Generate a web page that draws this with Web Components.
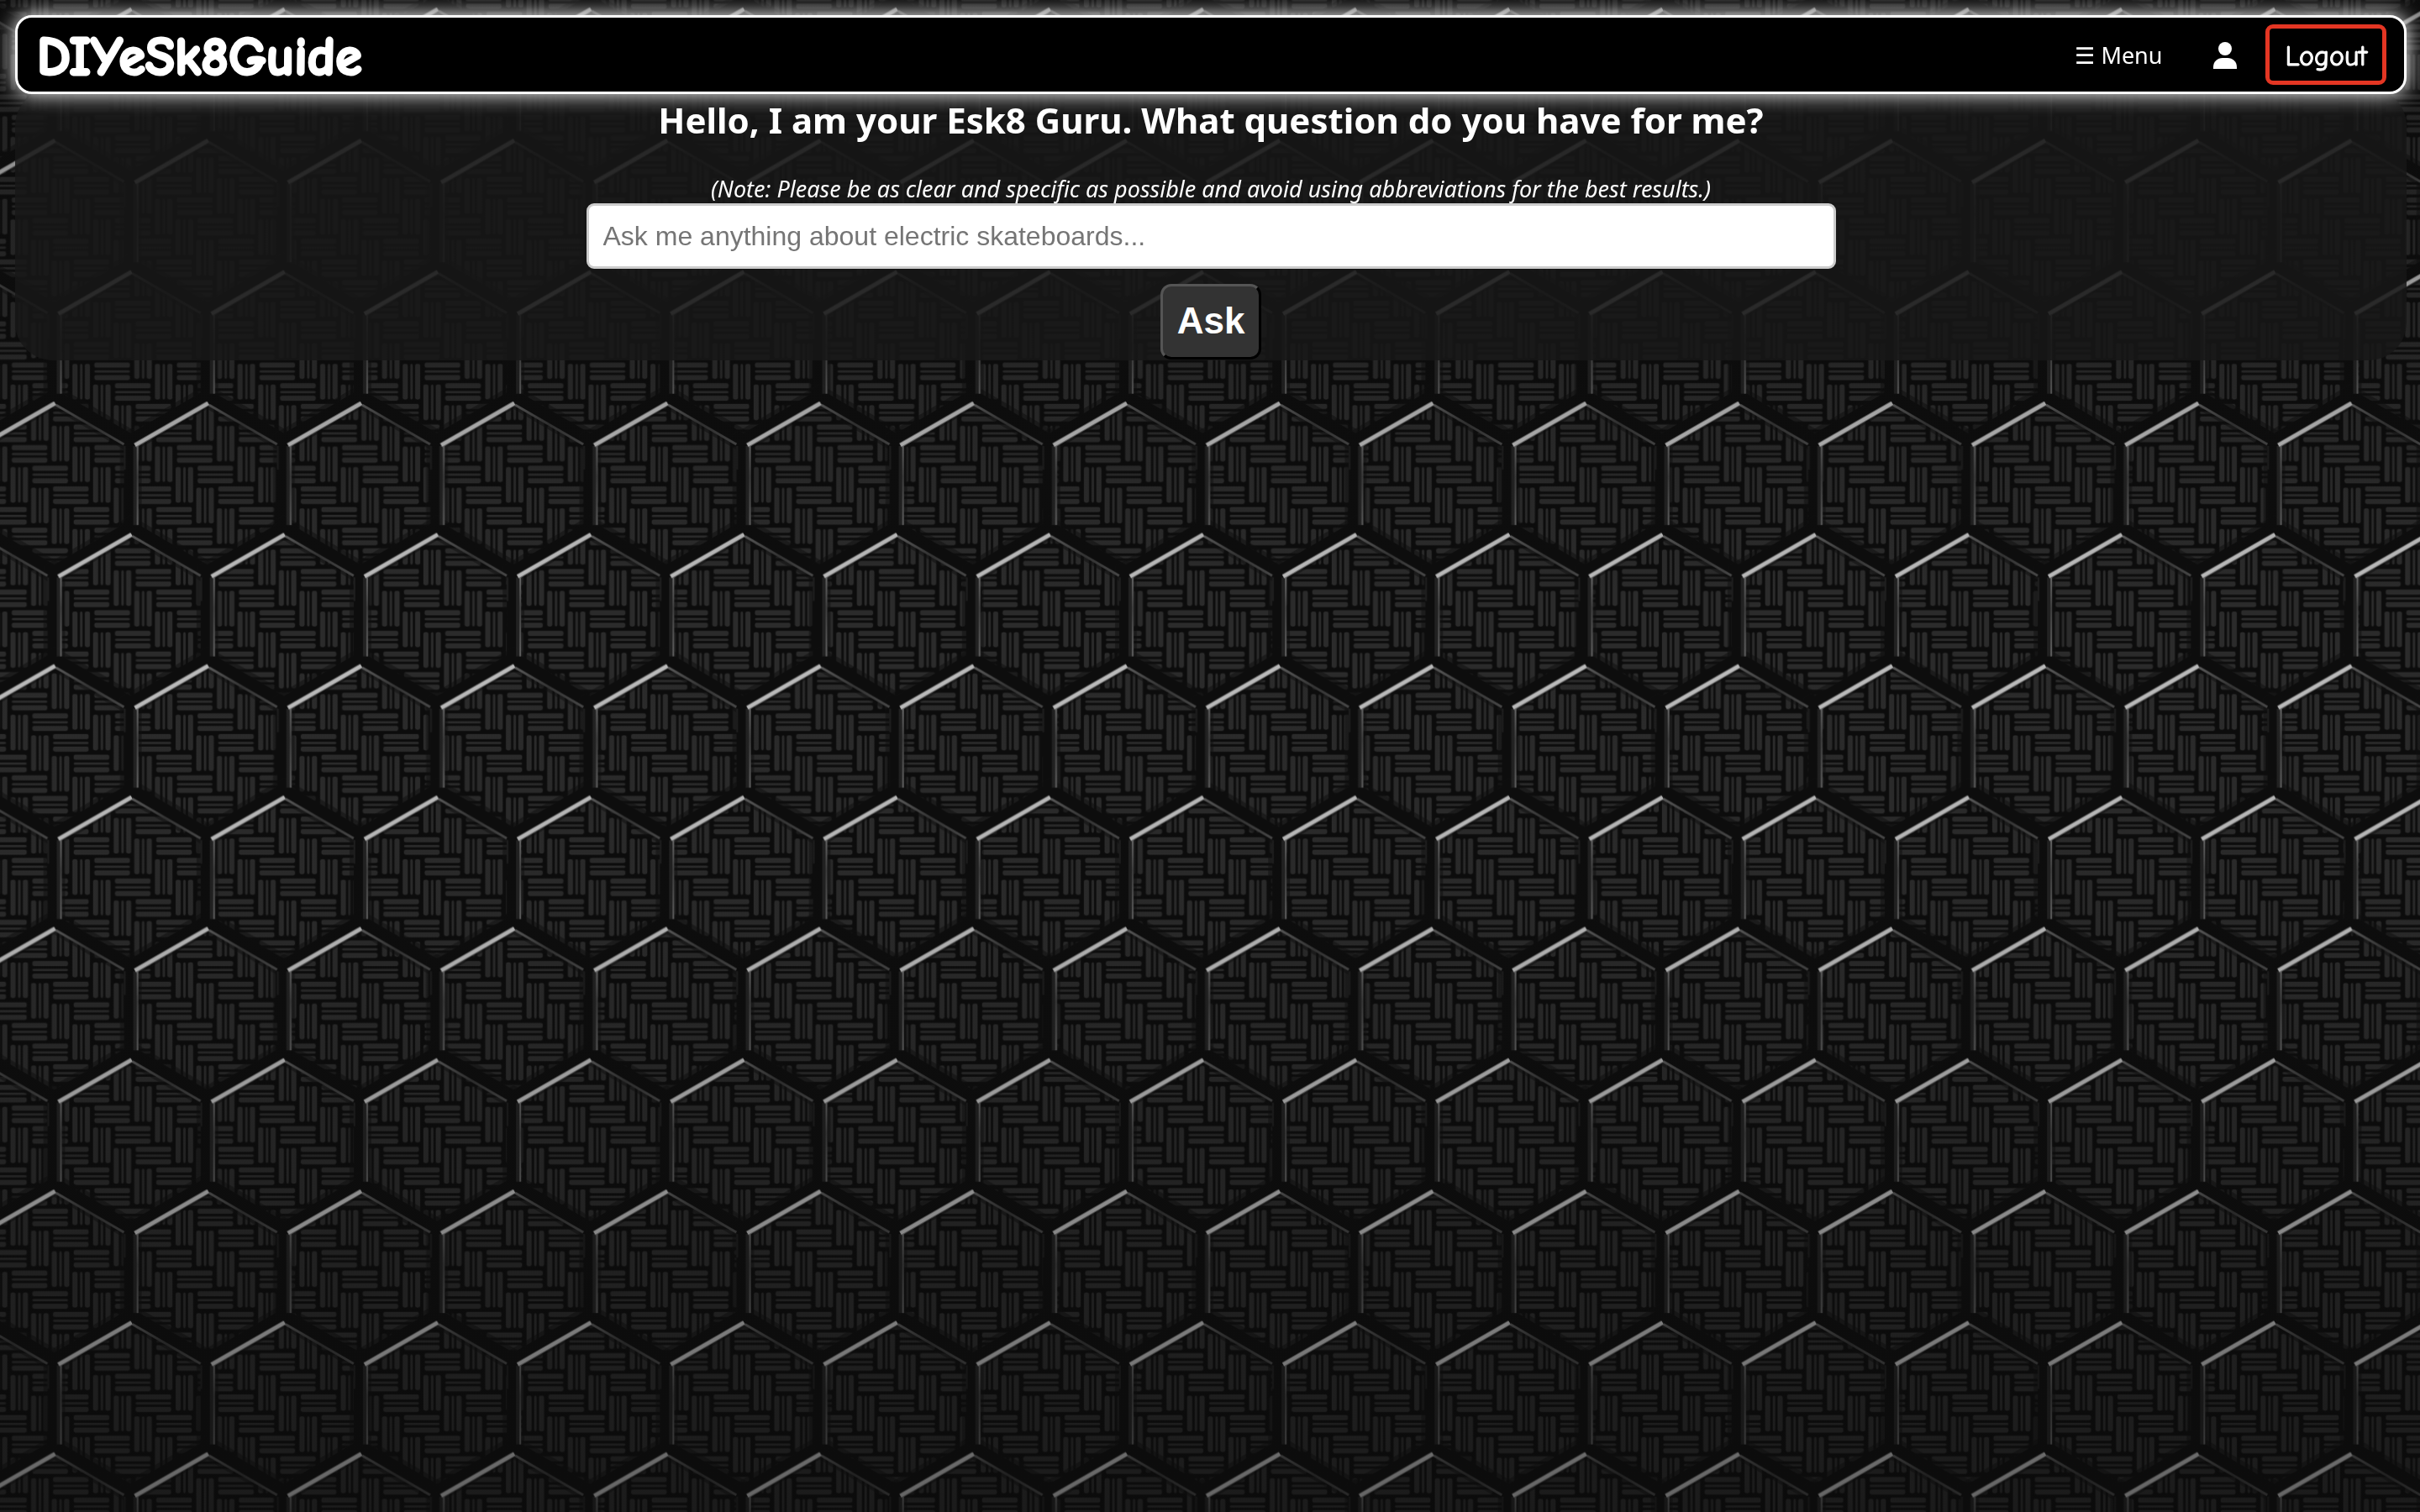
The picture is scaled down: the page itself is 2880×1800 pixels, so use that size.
<!DOCTYPE html>
<html lang="en">
<head>
<meta charset="utf-8">
<title>DIYeSk8Guide</title>
<style>
  html { background: #0b0b0b; }
  body { margin: 0; padding: 18px 16px 0 18px; color: #fff; font-family: "Noto Sans", "Open Sans", sans-serif; }
</style>
</head>
<body>
<hex-backdrop></hex-backdrop>
<site-nav>
  <span slot="brand">DIYeSk8Guide</span>
  <span slot="action">Logout</span>
</site-nav>
<guru-panel>
  <span slot="title">Hello, I am your Esk8 Guru. What question do you have for me?</span>
  <span slot="note">(Note: Please be as clear and specific as possible and avoid using abbreviations for the best results.)</span>
</guru-panel>

<script>
/* Carbon weave with embossed hexagons, tiled over the whole window. */
class HexBackdrop extends HTMLElement {
  connectedCallback() {
    const bars = (x, y, horizontal) => [[2, 5.6], [10.8, 2.6], [16.4, 5.6]].map(([o, t]) => horizontal
      ? `<rect x="${x + 3.5}" y="${y + o}" width="41" height="${t}" rx="2"/>`
      : `<rect x="${x + o}" y="${y + 3.5}" width="${t}" height="41" rx="2"/>`).join('');
    let weave = '';
    for (let r = 0; r < 4; r++) {
      const start = ((2 + r) % 4) * 24;
      weave += bars(start, r * 24, true);
      if (start === 72) weave += bars(-24, r * 24, true);
      const top = ((r + 3) % 4) * 24;
      weave += bars(r * 24, top, false);
      if (top === 72) weave += bars(r * 24, -24, false);
    }
    const W = 182.2, H = 312.7;
    const spots = [];
    for (let j = -1; j <= 3; j++)
      for (let i = -1; i <= 2; i++)
        spots.push([i * W + (j % 2 ? W / 2 : 0), j * H / 2]);
    const place = id => spots.map(([x, y]) => `<use href="#${id}" x="${x}" y="${y}"/>`).join('');
    this.attachShadow({ mode: 'open' }).innerHTML = `
      <style>
        :host { display: block; position: fixed; inset: 0; z-index: -1; }
        svg { display: block; width: 100%; height: 100%; }
      </style>
      <svg aria-hidden="true">
        <defs>
          <linearGradient id="faint" gradientUnits="userSpaceOnUse" x1="0" y1="0" x2="84" y2="50">
            <stop offset="0" stop-color="#5c5c5c"/><stop offset=".5" stop-color="#343434"/><stop offset="1" stop-color="#484848"/>
          </linearGradient>
          <linearGradient id="side" gradientUnits="userSpaceOnUse" x1="0" y1="50" x2="0" y2="146">
            <stop offset="0" stop-color="#6a6a6a"/><stop offset=".4" stop-color="#404040"/><stop offset="1" stop-color="#606060"/>
          </linearGradient>
          <linearGradient id="shade" x1="0" y1="0" x2="0" y2="1">
            <stop offset="0" stop-color="#0b0b0b" stop-opacity=".3"/><stop offset=".25" stop-color="#0b0b0b" stop-opacity=".16"/>
            <stop offset=".4" stop-color="#0b0b0b" stop-opacity="0"/><stop offset=".6" stop-color="#0b0b0b" stop-opacity=".05"/>
            <stop offset="1" stop-color="#0b0b0b" stop-opacity=".5"/>
          </linearGradient>
          <pattern id="weave" patternUnits="userSpaceOnUse" x="10.6" y="85.9" width="98.27" height="98.27" viewBox="0 0 96 96">
            <rect width="96" height="96" fill="#0c0c0c"/>
            <g fill="#2b2b2b" stroke="#2b2b2b" stroke-opacity=".2" stroke-width="1.4">${weave}</g>
          </pattern>
          <g id="groove" fill="none" stroke="#0d0d0d">
            <path d="M91 46L0-7L-91 46V150" stroke-width="26" stroke-opacity=".5"/>
            <path d="M91 46L0-7L-91 46V150" stroke-width="16"/>
          </g>
          <g id="edge" fill="none">
            <path d="M2 3L83 50" stroke="url(#faint)" stroke-width="3"/>
            <path d="M84 52V80" stroke="#1e1e1e" stroke-width="2"/>
            <path d="M-85 52V146" stroke="#303030" stroke-width="6" stroke-opacity=".6"/>
            <rect x="-84" y="50" width="2" height="96" fill="url(#side)"/>
            <path d="M1 1L-86 51" stroke="#6c6c6c" stroke-width="6"/>
            <path d="M1 1L-86 51" stroke="#bcbcbc" stroke-width="4"/>
          </g>
          <pattern id="hex" patternUnits="userSpaceOnUse" x="64.5" y="479" width="${W}" height="${H}">
            ${place('groove')}${place('edge')}
          </pattern>
        </defs>
        <rect width="100%" height="100%" fill="url(#weave)"/>
        <rect width="100%" height="100%" fill="url(#hex)"/>
        <rect width="100%" height="100%" fill="url(#shade)"/>
      </svg>`;
  }
}

class SiteNav extends HTMLElement {
  connectedCallback() {
    this.attachShadow({ mode: 'open' }).innerHTML = `
      <style>
        :host { display: block; position: relative; z-index: 1; }
        nav { display: flex; align-items: center; box-sizing: border-box; height: 94px; padding: 0 21px 0 23px;
              background: #000; border: 3px solid #fff; border-radius: 20px; box-shadow: 0 0 24px #fff; }
        a { color: inherit; text-decoration: none; }
        .brand, .logout { font-family: "Comic Sans MS", "Comic Neue", "Open Sans", cursive; }
        .brand { margin-right: auto; padding-top: 6px; font-size: 64px; font-weight: 700; line-height: 80px; -webkit-text-stroke: 3px #fff; }
        button { color: inherit; background: none; border: 0; cursor: pointer; }
        .menu { padding: 2px 0 0; font-family: inherit; font-size: 27px; line-height: 36px; }
        .user { display: flex; padding-top: 2px; margin: 0 34px 0 61px; }
        .user svg { display: block; width: 28px; height: 32px; }
        .logout { box-sizing: border-box; height: 72px; padding: 3px 18px 0; border: 5px solid #e43623; border-radius: 9px;
                  font-size: 34px; font-weight: 400; -webkit-text-stroke: 1px #fff; }
      </style>
      <nav>
        <a class="brand" href="#"><slot name="brand"></slot></a>
        <button class="menu" type="button">☰ Menu</button>
        <a class="user" href="#" aria-label="Profile">
          <svg viewBox="0 0 28 32" fill="#fff"><circle cx="14" cy="8" r="8"/><path d="M0 32V30C0 23 5 19 11 19H17C23 19 28 23 28 30V32Z"/></svg>
        </a>
        <button class="logout" type="button"><slot name="action"></slot></button>
      </nav>`;
  }
}

class GuruPanel extends HTMLElement {
  connectedCallback() {
    this.attachShadow({ mode: 'open' }).innerHTML = `
      <style>
        :host { display: block; margin-top: -7px; }
        section { display: flex; flex-direction: column; align-items: center; padding: 9px 0 1px;
                  background: rgba(23, 23, 23, .86); border-radius: 45px; }
        h1 { margin: 0 0 36px; font-size: 42px; font-weight: 700; line-height: 57px; }
        form { display: flex; flex-direction: column; align-items: center; width: 100%; }
        label { font-size: 27px; font-style: italic; line-height: 35px; }
        input { box-sizing: border-box; width: calc(50% + 64px); height: 78px; padding: 0 17px; margin-bottom: 18px;
                border: 3px solid #ccc; border-radius: 9px; background: #fff; color: #000;
                font: 32px "Liberation Sans", Arial, sans-serif; }
        input::placeholder { color: #757575; }
        button { box-sizing: border-box; height: 90px; padding: 0 17px 2px; background: #333; color: #fff;
                 border: 3px solid; border-color: #555 #000 #000 #555; border-radius: 13px;
                 font: bold 44px "Liberation Sans", Arial, sans-serif; cursor: pointer; }
      </style>
      <section>
        <h1><slot name="title"></slot></h1>
        <form>
          <label for="question"><slot name="note"></slot></label>
          <input id="question" type="text" placeholder="Ask me anything about electric skateboards...">
          <button type="button">Ask</button>
        </form>
      </section>`;
  }
}

customElements.define('hex-backdrop', HexBackdrop);
customElements.define('site-nav', SiteNav);
customElements.define('guru-panel', GuruPanel);
</script>
</body>
</html>
